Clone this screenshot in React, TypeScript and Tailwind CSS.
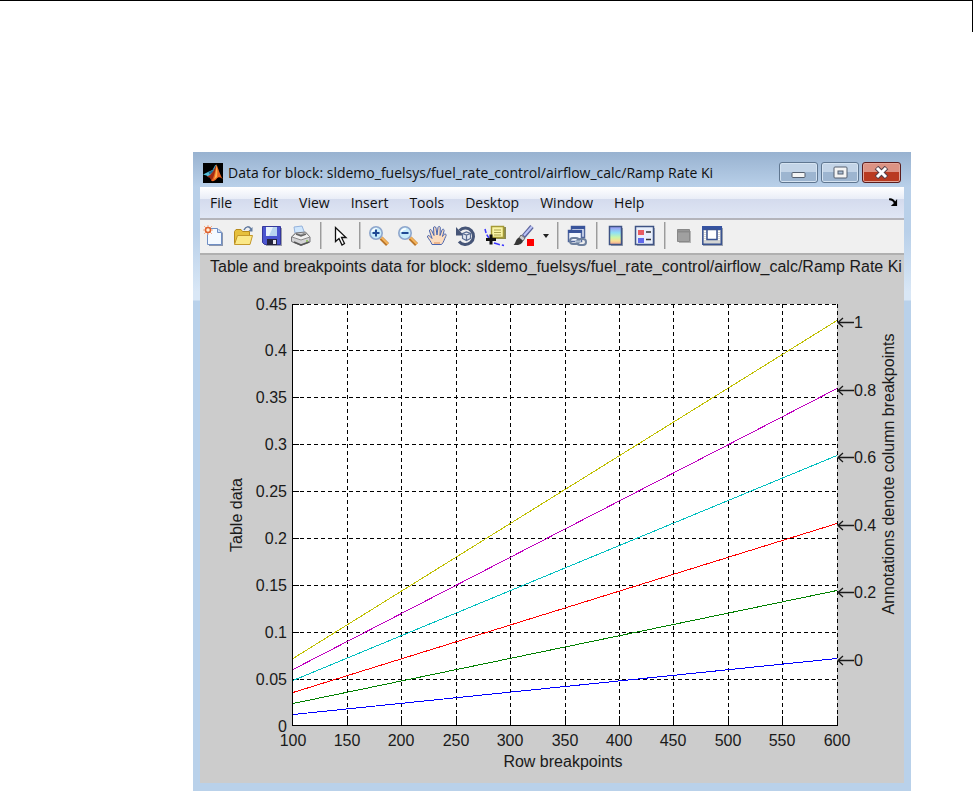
import React from 'react';

const MENUS = ['File', 'Edit', 'View', 'Insert', 'Tools', 'Desktop', 'Window', 'Help'];

// plot area inside the 704x528 figure
const LEFT = 93;
const RIGHT = 637;
const TOP = 49;
const BOTTOM = 471;

const X_TICKS = [100, 150, 200, 250, 300, 350, 400, 450, 500, 550, 600];
const Y_TICKS = [0, 0.05, 0.1, 0.15, 0.2, 0.25, 0.3, 0.35, 0.4, 0.45];

const SERIES = [
  { label: '0', start: 0.012, end: 0.072, color: '#0000ff' },
  { label: '0.2', start: 0.024, end: 0.144, color: '#008000' },
  { label: '0.4', start: 0.036, end: 0.216, color: '#ff0000' },
  { label: '0.6', start: 0.048, end: 0.288, color: '#00bfbf' },
  { label: '0.8', start: 0.06, end: 0.36, color: '#bf00bf' },
  { label: '1', start: 0.072, end: 0.432, color: '#bfbf00' },
];

const px = (v: number) => Math.floor(LEFT + ((v - 100) / 500) * (RIGHT - LEFT));
const py = (v: number) => Math.floor(BOTTOM - (v / 0.45) * (BOTTOM - TOP));

const Icon: React.FC<{ children: React.ReactNode }> = ({ children }) => (
  <svg width="22" height="22" viewBox="0 0 22 22" fill="none" aria-hidden="true">
    {children}
  </svg>
);

const ToolButton: React.FC<{ label: string; children: React.ReactNode }> = ({ label, children }) => (
  <button type="button" aria-label={label} title={label} className="flex h-8 w-[29px] shrink-0 items-center pl-[3px]">
    <Icon>{children}</Icon>
  </button>
);

const Separator = () => (
  <div className="flex w-2.5 shrink-0 justify-center">
    <div className="h-[27px] w-0.5 border-l border-[#9c9c9c] bg-[#c9c9c9]" />
  </div>
);

const Magnifier: React.FC<{ plus?: boolean }> = ({ plus }) => (
  <>
    <path d="M13 13l6.500 6.500" stroke="#b9752a" strokeWidth="4" />
    <path d="M13.500 12.500l6.500 6.500" stroke="#f5b45c" strokeWidth="2" />
    <circle cx="8" cy="8" r="6.200" fill="#c8ecfb" stroke="#8ea6cc" strokeWidth="1.600" />
    <path d="M4 7a4.500 4.500 0 0 1 5-3" stroke="#fff" strokeWidth="1.500" />
    <path d={plus ? 'M8 4.500v7M4.500 8h7' : 'M4.500 8h7'} stroke="#204a94" strokeWidth="2" />
  </>
);

const MatlabLogo = () => (
  <svg width="20" height="20" viewBox="0 0 20 20" aria-hidden="true" className="shrink-0">
    <path fill="#000" d="M0 0h20v20H0z" />
    <path fill="#55bcd8" d="M0 11.500l6-3 3.500-1.500 2.500-4.500 1.500-1-2.500 7-5 6-2.500-2z" />
    <path fill="#1d6f96" d="M5.500 9l4-1.500 3-5-3 7-3 2z" />
    <path fill="#a02a12" d="M4 13.500l3-1.500 3-3.500 3.500-7-1 10-4 6-2-3z" />
    <path fill="#ea6422" d="M8 17.500c3-2 4-9.500 5.500-16C15 4 16.500 11 20 16.500c-2.500-2.500-4.500-3-6.500-.500-2 2-3.500 3-5.500 1.500z" />
    <path fill="#fbb34f" d="M13.500 2c1 3.500 1 8 .500 12L11 16.500c1.500-4 2-9 2.500-14.500z" />
  </svg>
);

const TitleBar = () => (
  <header className="flex h-[35px] items-center pt-1.5 pr-[3px] pl-[3px]">
    <MatlabLogo />
    <h1 className="ml-[5px] min-w-0 flex-1 truncate text-[14px] leading-5 text-[#111]">
      Data for block: sldemo_fuelsys/fuel_rate_control/airflow_calc/Ramp Rate Ki
    </h1>
    <div className="flex gap-[3px]">
      <button
        type="button"
        aria-label="Minimize"
        className="flex h-[21px] w-[39px] items-center justify-center rounded-[3px] border border-[#5f7690] bg-linear-to-b from-[#c3d4e7] from-50% to-[#9db5d0] to-50% inset-ring inset-ring-[#d5e3f1]"
      >
        <svg width="15" height="15" viewBox="0 0 15 15" aria-hidden="true">
          <rect x="1" y="7.500" width="13" height="5" rx="1" fill="#f4f4f4" stroke="#555f6e" />
        </svg>
      </button>
      <button
        type="button"
        aria-label="Maximize"
        className="flex h-[21px] w-[38px] items-center justify-center rounded-[3px] border border-[#5f7690] bg-linear-to-b from-[#c3d4e7] from-50% to-[#9db5d0] to-50% inset-ring inset-ring-[#d5e3f1]"
      >
        <svg width="15" height="13" viewBox="0 0 15 13" aria-hidden="true">
          <rect x="1" y="1" width="13" height="11" rx="1" fill="#f4f4f4" stroke="#555f6e" />
          <rect x="5" y="5" width="5" height="3" fill="#a9bdd4" stroke="#555f6e" />
        </svg>
      </button>
      <button
        type="button"
        aria-label="Close"
        className="flex h-[21px] w-[39px] items-center justify-center rounded-[3px] border border-[#5b1d1d] bg-linear-to-b from-[#dc9384] from-45% to-[#b93a20] to-50% inset-ring inset-ring-[#e3a79b]"
      >
        <svg width="15" height="13" viewBox="0 0 15 13" aria-hidden="true">
          <path d="M2.500 1.500l10 10M12.500 1.500l-10 10" stroke="#54414a" strokeWidth="5" />
          <path d="M3 2l9 9M12 2l-9 9" stroke="#fff" strokeWidth="3" />
        </svg>
      </button>
    </div>
  </header>
);

const MenuBar = () => (
  <nav className="flex h-[31px] items-center bg-[linear-gradient(to_bottom,#ffffff,#e9edf7_38%,#d4dbed_40%,#e0e6f5)] pr-1.5 pl-2.5">
    <div className="flex flex-1 gap-[21px]">
      {MENUS.map(menu => (
        <button key={menu} type="button" className="text-[14px] leading-5 text-[#111]">
          {menu}
        </button>
      ))}
    </div>
    <button type="button" aria-label="Dock figure">
      <svg width="9" height="9" viewBox="0 0 10 10" fill="none" aria-hidden="true">
        <path d="M0 1.500c3-.500 5 1 6.500 4" stroke="#000" strokeWidth="2" />
        <path d="M9 1v8H2l3-3z" fill="#000" />
      </svg>
    </button>
  </nav>
);

const Toolbar = () => (
  <div role="toolbar" className="flex h-[37px] items-center overflow-hidden border-t-2 border-b-2 border-t-[#b4b4bb] border-b-[#b0b0b0] bg-[#f0f0f0] pb-0.5">
    <ToolButton label="New Figure">
      <path d="M6 4h10l4 4v13H6z" fill="#8b96ad" />
      <path d="M4.500 3.500h10l4 4v12h-14z" fill="#f4f9ff" stroke="#6f8ec4" />
      <path d="M14.500 3.500v4h4" fill="#cfe0f7" stroke="#6f8ec4" />
      <path d="M1 1l8 8M9 1l-8 8M5 0v10M0 5h10" stroke="#f3ad88" />
      <circle cx="5" cy="5" r="2.500" fill="#fff0d8" stroke="#e0602c" strokeWidth="1.500" />
    </ToolButton>
    <ToolButton label="Open File">
      <path d="M12 5c2-4 5-4 7-1" stroke="#60799e" strokeWidth="1.500" />
      <path d="M20.500 2v4.500H16z" fill="#60799e" />
      <path d="M2.500 18.500v-12l1.500-2h5l1.500 2h7v12z" fill="#e6c03c" stroke="#b78b1c" />
      <path d="M2.500 19.500l3-9h15l-2.500 9z" fill="#fbe887" stroke="#c4982a" />
    </ToolButton>
    <ToolButton label="Save Figure">
      <path d="M3 3h18v18H5z" fill="#9a9ca9" />
      <path d="M1.500 1.500h18v18h-16l-2-2z" fill="#4b55cf" stroke="#35389c" />
      <path d="M5 2h11v9H5z" fill="#e8f2fc" />
      <path d="M12 2h4v9H8z" fill="#b9d5f0" />
      <path d="M6 14h10v6H6z" fill="#25243e" />
      <path d="M12 15h3v4h-3z" fill="#e7e7f1" />
    </ToolButton>
    <ToolButton label="Print Figure">
      <path d="M5 8l-1-6 8-1 3 8z" fill="#cfe6fc" stroke="#94b2dc" />
      <path d="M1.500 12l4-4 10-1 4.500 5v5l-9 3.500-9.500-4z" fill="#d3d3d5" stroke="#77777b" />
      <path d="M2 12l9 3 9-3-4.500-4.500L11 10 5.500 8.500z" fill="#f1f1f1" stroke="#8b8b8b" />
      <path d="M4 17l7 3 8-3" stroke="#555" strokeWidth="1.500" />
      <path d="M6 9l5 2 5-2" stroke="#666" strokeWidth="1.500" />
      <path d="M16 16h2" stroke="#89bb4e" strokeWidth="1.500" />
    </ToolButton>
    <Separator />
    <ToolButton label="Edit Plot">
      <path d="M6.500 2.500v14l3.500-3 3 6.500 2.500-1.500-3-6h4.500z" fill="#fff" stroke="#111" strokeWidth="1.300" />
    </ToolButton>
    <Separator />
    <ToolButton label="Zoom In">
      <Magnifier plus />
    </ToolButton>
    <ToolButton label="Zoom Out">
      <Magnifier />
    </ToolButton>
    <ToolButton label="Pan">
      <path
        d="M6 19.500c-1-3-3-5-4.500-7.500-.500-1.500 1.300-2 2.300-.800L6 13.500 3.500 6c-.300-1.700 1.700-2 2.200-.500L8 10.500 7.500 3c0-1.800 2.200-1.800 2.500 0l1 7 1-7.500c.300-1.500 2.400-1.300 2.300.300L14 10.500l2-5.500c.600-1.500 2.400-.800 2.100.700l-1.600 5.800c1-1.500 1.700-2.500 2.700-2.500 1.300.200 1.100 1.500.500 2.500-1.600 3-1.700 5.500-4.200 8z"
        fill="#fbdcc0"
        stroke="#4a65ae"
      />
      <path d="M7 13h8v6H8z" fill="#fbdcc0" />
      <path d="M8 18h6" stroke="#edb58c" strokeWidth="2" />
    </ToolButton>
    <ToolButton label="Rotate 3D">
      <path d="M4.500 5.500A8.200 8.200 0 1 1 4 16.500" stroke="#465577" strokeWidth="3" />
      <path d="M1 2v8.500h8z" fill="#465577" />
      <path d="M7.500 8.500l4-1.500 4 1.500v5l-4 2-4-2zM7.500 8.500l4 1.500 4-1.500M11.500 10v5.500" fill="#e3e8f1" stroke="#596c92" strokeWidth="1.200" />
    </ToolButton>
    <ToolButton label="Data Cursor">
      <path d="M1 4c1 4 1.500 6 4 9" stroke="#3b36ff" strokeWidth="1.500" strokeDasharray="4 2" />
      <path d="M10 18c3 1 7 2 10 2.500" stroke="#3b36ff" strokeWidth="1.500" strokeDasharray="6 2" />
      <path d="M9 2h13v12H9z" fill="#8c8a52" />
      <path d="M7.500 1.500h12v11h-12z" fill="#faf4a4" stroke="#a59a36" strokeWidth="1.500" />
      <path d="M10 5h7M10 7.500h7M10 10h7" stroke="#aaa250" />
      <path d="M7 9.500v10M2 14.500h10" stroke="#111" strokeWidth="3" />
    </ToolButton>
    <ToolButton label="Brush">
      <path d="M10.500 11.500L19 1.500" stroke="#596199" strokeWidth="4.500" />
      <path d="M11 10.500L19 1.500" stroke="#bdc5f7" strokeWidth="2" />
      <path d="M8 10l4 3-2 3-4-3z" fill="#cdced3" stroke="#666" />
      <path d="M6 12.500l4 3.500c-1 3.500-5 4.500-9.500 4 2.500-2 2-6 5.500-7.500z" fill="#373737" />
      <path d="M14 14h7v7h-7z" fill="#f00" />
    </ToolButton>
    <button type="button" aria-label="Brush colors" className="flex h-8 w-3.5 shrink-0 items-center justify-center">
      <svg width="6" height="4" viewBox="0 0 6 4" aria-hidden="true">
        <path d="M0 0h6L3 4z" fill="#222" />
      </svg>
    </button>
    <Separator />
    <ToolButton label="Link Plot">
      <path d="M5.500 1.500h13v11h-13z" fill="#dfe7f8" stroke="#50669b" strokeWidth="1.500" />
      <path d="M5 2.500h14" stroke="#39549b" strokeWidth="3" />
      <path d="M2.500 5.500h13v11h-13z" fill="#f3f7ff" stroke="#50669b" strokeWidth="1.500" />
      <path d="M2 6.500h14" stroke="#39549b" strokeWidth="3" />
      <rect x="4" y="13" width="9" height="6" rx="3" stroke="#6d809e" strokeWidth="2" />
      <rect x="11" y="14" width="9" height="6" rx="3" stroke="#6d809e" strokeWidth="2" />
      <path d="M9 16.500h6" stroke="#afbed2" strokeWidth="2" />
    </ToolButton>
    <Separator />
    <ToolButton label="Insert Colorbar">
      <defs>
        <linearGradient id="colorbar" x1="0" y1="0" x2="0" y2="1">
          <stop offset="0" stopColor="#9b92f3" />
          <stop offset="0.35" stopColor="#8fe0f5" />
          <stop offset="0.6" stopColor="#c8f5aa" />
          <stop offset="0.8" stopColor="#fbdf92" />
          <stop offset="1" stopColor="#f0a095" />
        </linearGradient>
      </defs>
      <path d="M6 3h12v18H6z" fill="#9aa0ac" />
      <path d="M4.500 1.500h12v18h-12z" fill="url(#colorbar)" stroke="#3f5384" strokeWidth="1.500" />
    </ToolButton>
    <ToolButton label="Insert Legend">
      <path d="M3 3h18v18H3z" fill="#a4a9b4" />
      <path d="M1.500 1.500h18v18h-18z" fill="#e9effb" stroke="#3f5384" strokeWidth="1.500" />
      <path d="M4 5h6v5H4z" fill="#e85d61" />
      <path d="M4 13h6v5H4z" fill="#6068eb" />
      <path d="M12 7h5M12 14.500h5" stroke="#333" strokeWidth="1.500" />
    </ToolButton>
    <Separator />
    <ToolButton label="Hide Plot Tools">
      <path d="M6 6h12v12H6z" fill="#b5b5b5" />
      <path d="M4.500 4.500h12v12h-12z" fill="#a0a0a0" stroke="#888" />
      <path d="M5 6.500h11" stroke="#8a8a8a" strokeWidth="2" />
    </ToolButton>
    <ToolButton label="Show Plot Tools and Dock Figure">
      <path d="M1 3h20v18H1z" fill="#9ba1ae" />
      <path d="M.800 1.800h18.500v17.500H.800z" fill="#d5d6d4" stroke="#3a5390" strokeWidth="1.500" />
      <path d="M0 3h20" stroke="#3552a0" strokeWidth="4" />
      <path d="M5 4.500h10v10H5z" fill="#fff" stroke="#3a5390" strokeWidth="1.500" />
      <path d="M3 6v9M17 6v9" stroke="#fff" strokeDasharray="1 1" strokeWidth="2" />
    </ToolButton>
  </div>
);

const Figure = () => (
  <svg viewBox="0 0 704 528" className="block w-full bg-[#cccccc] font-['Liberation_Sans',Arial,sans-serif] text-[16px]" fill="#1a1a1a" role="img" aria-label="Table data by row breakpoints">
    <text x="10" y="17">
      Table and breakpoints data for block: sldemo_fuelsys/fuel_rate_control/airflow_calc/Ramp Rate Ki
    </text>

    <rect x={LEFT} y={TOP} width={RIGHT - LEFT} height={BOTTOM - TOP} fill="#fff" />

    {/* grid */}
    <g stroke="#000" strokeDasharray="4 3" shapeRendering="crispEdges">
      {X_TICKS.slice(1).map(v => (
        <line key={v} x1={px(v) + 0.5} y1={TOP} x2={px(v) + 0.5} y2={BOTTOM} />
      ))}
      {Y_TICKS.slice(1).map(v => (
        <line key={v} x1={LEFT} y1={py(v) + 0.5} x2={RIGHT} y2={py(v) + 0.5} />
      ))}
    </g>

    {/* axes and tick marks */}
    <g stroke="#000" shapeRendering="crispEdges">
      <path d={`M${LEFT - 0.5} ${TOP}V${BOTTOM - 0.5}H${RIGHT + 1}`} fill="none" />
      {X_TICKS.slice(1).map(v => (
        <line key={v} x1={px(v) + 0.5} y1={BOTTOM - 10} x2={px(v) + 0.5} y2={BOTTOM} />
      ))}
      {Y_TICKS.slice(1).map(v => (
        <line key={v} x1={LEFT} y1={py(v) + 0.5} x2={LEFT + 6} y2={py(v) + 0.5} />
      ))}
    </g>

    {SERIES.map(s => (
      <line
        key={s.label}
        x1={LEFT}
        y1={py(s.start) + 0.5}
        x2={RIGHT}
        y2={py(s.end) + 0.5}
        stroke={s.color}
        shapeRendering="crispEdges"
      />
    ))}

    {X_TICKS.map(v => (
      <text key={v} x={px(v)} y="491" textAnchor="middle">{v}</text>
    ))}
    {Y_TICKS.map(v => (
      <text key={v} x="87" y={py(v) + 6} textAnchor="end">{v}</text>
    ))}

    {SERIES.map(s => {
      const y = py(s.end) + 2;
      return (
        <g key={s.label}>
          <path d={`M638 ${y + 0.5}h16M643 ${y - 4}l-5 4.500 5 4.500`} fill="none" stroke="#1a1a1a" strokeWidth="1.3" />
          <text x="654" y={y + 6}>{s.label}</text>
        </g>
      );
    })}

    <text x="363" y="512" textAnchor="middle">Row breakpoints</text>
    <text transform="translate(42 260) rotate(-90)" textAnchor="middle">Table data</text>
    <text transform="translate(694 219) rotate(-90)" textAnchor="middle">Annotations denote column breakpoints</text>
  </svg>
);

const App: React.FC = () => {
  return (
    <div className="min-h-screen bg-white font-['Open_Sans','Noto_Sans',sans-serif]">
      <div className="h-8 border-t border-r border-black" />
      <main className="mt-[120px] mr-[62px] ml-[193px] bg-[linear-gradient(to_bottom,#98b2d0_0px,#b9d0e9_35px,#b9d0e9_80px,#d9e7f6_140px,#d9e7f6_148px,#b9d1ea_149px)] px-[7px] pb-2">
        <TitleBar />
        <MenuBar />
        <Toolbar />
        <Figure />
      </main>
    </div>
  );
};

export default App;
